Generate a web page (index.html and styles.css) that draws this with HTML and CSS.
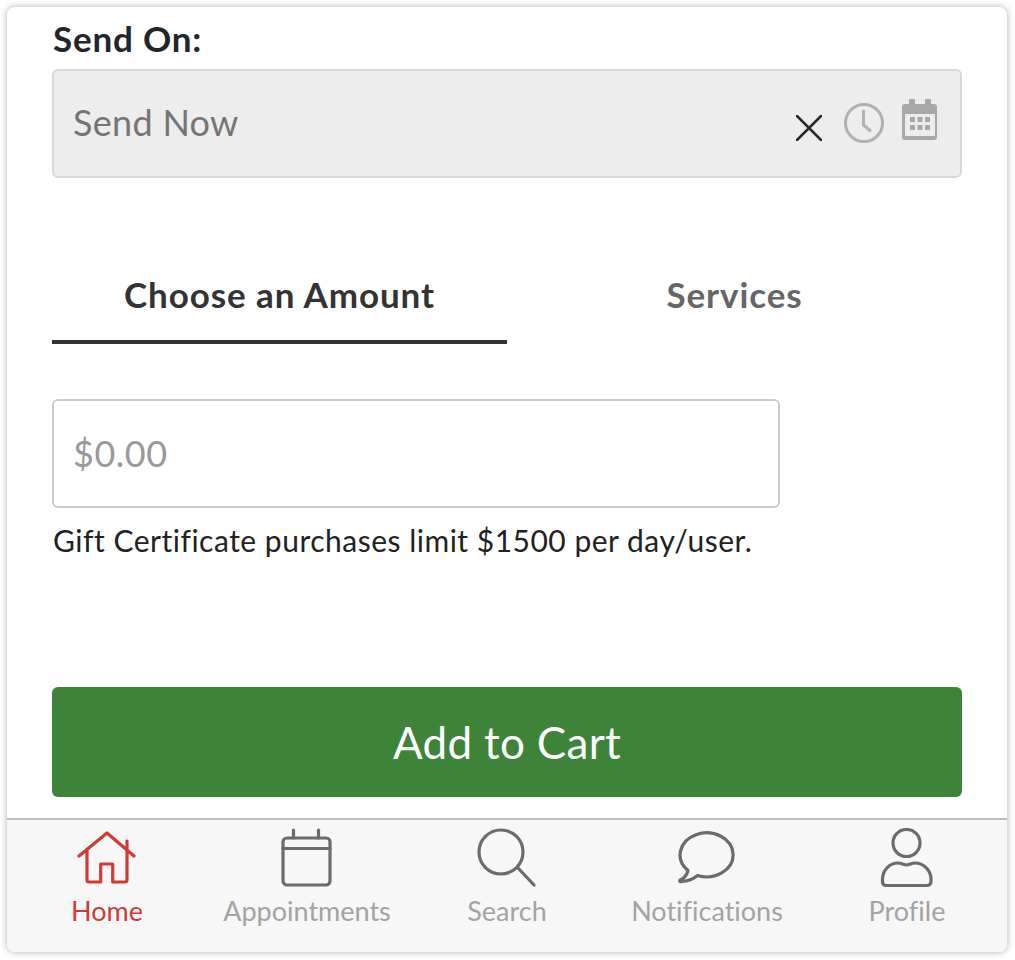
FILE: index.html
```html
<!DOCTYPE html>
<html>
	<head>
		<title>Gift Certificate</title>
		<meta name="viewport" content="width=device-width, initial-scale=1" />
		<link rel="stylesheet" href="styles.css">
	</head>
	<body>
		<div class="Card">
			<div class="Content">
				<label class="SendLabel">Send On:</label>
				<div class="SendField">
					<span class="SendValue">Send Now</span>
					<div class="FieldIcons">
						<svg class="IconClear" width="26" height="26" viewBox="0 0 26 26"><path d="M1 1L25 25M25 1L1 25"/></svg>
						<svg class="IconClock" width="40" height="40" viewBox="0 0 40 40"><circle cx="20" cy="20" r="18.5"/><path d="M19.5 8V22L26 27.500"/></svg>
						<svg class="IconDate" width="36" height="41" viewBox="0 0 36 41">
							<path d="M8 0h4a1 1 0 0 1 1 1v4h10V1a1 1 0 0 1 1-1h4a1 1 0 0 1 1 1v4h3a3 3 0 0 1 3 3v30a3 3 0 0 1-3 3H3a3 3 0 0 1-3-3V8a3 3 0 0 1 3-3h4V1a1 1 0 0 1 1-1z"/>
							<path class="Hole" d="M3 15h30v22H3z"/>
							<path d="M8 18h5v5H8zM15.500 18h5v5h-5zM23 18h5v5h-5zM8 26h5v5H8zM15.500 26h5v5h-5zM23 26h5v5h-5z"/>
						</svg>
					</div>
				</div>

				<div class="Tabs">
					<div class="Tab Active">Choose an Amount</div>
					<div class="Tab">Services</div>
				</div>

				<div class="AmountInput">$0.00</div>
				<p class="Note">Gift Certificate purchases limit $1500 per day/user.</p>

				<button class="AddButton">Add to Cart</button>
			</div>

			<nav class="TabBar">
				<div class="NavItem Current">
					<svg viewBox="0 0 60 60"><path d="M2 28L30 5L57 28M10 21V52a2 2 0 0 0 2 2H23.700V36H35.700V54H48a2 2 0 0 0 2-2V13"/></svg>
					<span>Home</span>
				</div>
				<div class="NavItem">
					<svg viewBox="0 0 60 60"><rect x="6" y="10" width="47" height="47" rx="4"/><path d="M6 20.500H53M16.500 2V10M41.500 2V10"/></svg>
					<span>Appointments</span>
				</div>
				<div class="NavItem">
					<svg viewBox="0 0 60 60"><circle cx="24" cy="24" r="22"/><path d="M41 40L57 57"/></svg>
					<span>Search</span>
				</div>
				<div class="NavItem">
					<svg viewBox="0 0 60 60"><path d="M20.500 47.500A26.500 22 0 1 0 11 42.500Q9 50 3 52Q2 54 5 53.500Q14 53 20.500 47.500Z"/></svg>
					<span>Notifications</span>
				</div>
				<div class="NavItem">
					<svg viewBox="0 0 60 60"><circle cx="29.500" cy="15" r="13.500"/><path d="M9 57.500H50a4 4 0 0 0 4-4V51C54 42 46 35 38 35C34 35 33 37 29.500 37C26 37 25 35 21 35C13 35 5.500 42 5.500 51V53.500a4 4 0 0 0 3.500 4z"/></svg>
					<span>Profile</span>
				</div>
			</nav>
		</div>
	</body>
</html>
```
FILE: styles.css
```css
:root
{
	--ink: #22262a;
	--green: #3d8338;
	--red: #cf3a37;
	--navGrey: #a3a3a3;
	--iconGrey: #6b6b6b;
}

html, body
{
	margin: 0;
	background: #fff;
}

body
{
	padding: 7px;
	font-family: Lato, sans-serif;
	font-variant-ligatures: none;
	color: var(--ink);
}

.Card
{
	width: 1000px;
	height: 945px;
	display: flex;
	flex-direction: column;
	background: #fff;
	border-radius: 8px;
	overflow: hidden;
	box-shadow: 0 0 7px rgba(0,0,0,0.32);
}

.Content
{
	flex: 1;
	display: flex;
	flex-direction: column;
	padding: 0 45px;
}

.SendLabel
{
	margin-top: 11px;
	padding-left: 1px;
	font-size: 35px;
	line-height: 40px;
	font-weight: 700;
	letter-spacing: 0.8px;
}

.SendField
{
	box-sizing: border-box;
	height: 109px;
	margin-top: 11px;
	display: flex;
	align-items: center;
	justify-content: space-between;
	padding: 0 22px 0 19px;
	background: #ededed;
	border: 2px solid #d8d8d8;
	border-radius: 6px;
}

.SendValue
{
	margin-top: -4px;
	font-size: 36px;
	letter-spacing: 0.3px;
	color: #757575;
}

.FieldIcons
{
	display: flex;
	align-items: flex-start;
	height: 41px;
	margin-top: -9px;
}

.IconClear
{
	margin-top: 16px;
	margin-right: 22px;
}
.IconClear path
{
	fill: none;
	stroke: #2b2b2b;
	stroke-width: 2.500;
	stroke-linecap: round;
}

.IconClock
{
	margin-top: 4px;
	margin-right: 18px;
}
.IconClock circle,
.IconClock path
{
	fill: none;
	stroke: #b1b1b1;
	stroke-width: 3;
	stroke-linecap: round;
}

.IconDate path
{
	fill: #a8a8a8;
}
.IconDate .Hole
{
	fill: #ededed;
}

.Tabs
{
	display: flex;
	margin-top: 91px;
}

.Tab
{
	flex: 1;
	height: 71px;
	text-align: center;
	font-size: 35px;
	line-height: 51px;
	font-weight: 700;
	letter-spacing: 0.9px;
	color: #666;
}

.Tab.Active
{
	color: #333;
	border-bottom: 4px solid #333;
}

.AmountInput
{
	box-sizing: border-box;
	width: 728px;
	height: 109px;
	margin-top: 55px;
	padding: 0 19px 2px;
	display: flex;
	align-items: center;
	background: #fff;
	border: 2px solid #ccc;
	border-radius: 6px;
	font-size: 36px;
	letter-spacing: 0.5px;
	color: #999;
}

.Note
{
	margin: 12px 0 0 0;
	padding-left: 1px;
	font-size: 30px;
	line-height: 40px;
	letter-spacing: 0.5px;
	color: #222;
}

.AddButton
{
	height: 110px;
	margin-top: 127px;
	background: var(--green);
	border: none;
	border-radius: 6px;
	font-family: inherit;
	font-size: 44px;
	letter-spacing: 0.3px;
	color: #fff;
}

.TabBar
{
	box-sizing: border-box;
	height: 134px;
	display: flex;
	background: #f7f7f7;
	border-top: 2px solid #bbb;
}

.NavItem
{
	flex: 1;
	display: flex;
	flex-direction: column;
	align-items: center;
	padding-top: 8px;
	color: var(--navGrey);
	font-size: 27px;
	line-height: 32px;
}

.NavItem svg
{
	width: 60px;
	height: 60px;
	margin-bottom: 7px;
	fill: none;
	stroke: var(--iconGrey);
	stroke-width: 3.200;
	stroke-linecap: round;
	stroke-linejoin: round;
}

.NavItem.Current
{
	color: var(--red);
}
.NavItem.Current svg
{
	stroke: var(--red);
}
```
